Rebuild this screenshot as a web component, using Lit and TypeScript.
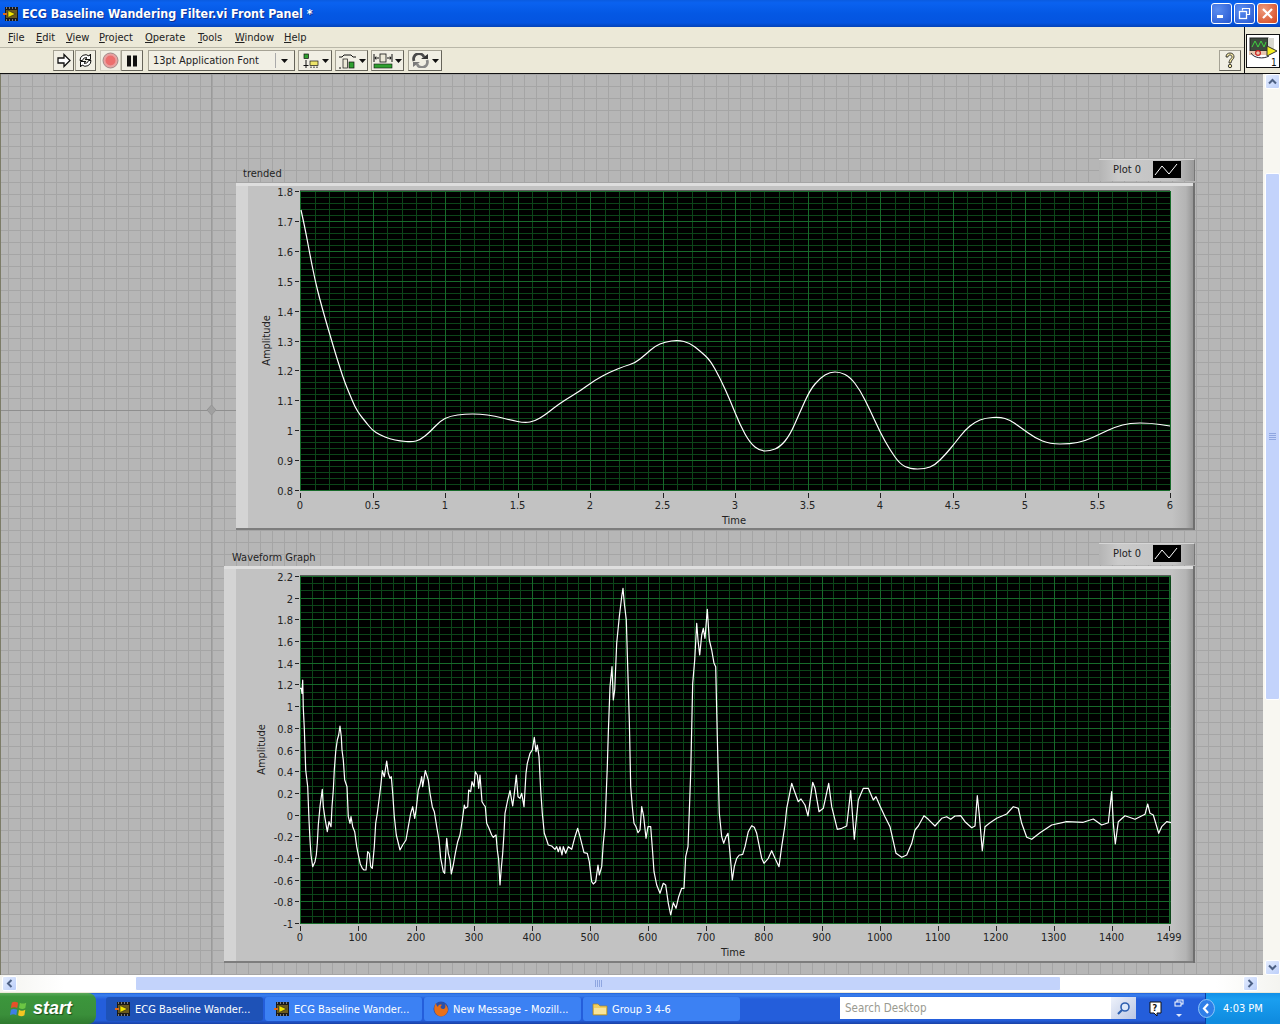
import { LitElement, html, css, svg } from 'lit';
import { customElement, property } from 'lit/decorators.js';

const UI_FONT = '"DejaVu Sans", "Noto Sans", sans-serif';

// traced from the two graphs, page coordinates come out of the helpers below
const TRENDED = [
  301,210,305,228,310,255,315,280,320,300,325,318,330,335,335,352,340,368,345,383,350,395,355,407,360,415,365,421,
  372,430,380,435,390,439,400,441,412,442,420,440,430,432,440,421,450,416,465,414,480,414,495,416,510,420,525,423,
  535,421,545,415,555,407,565,400,580,391,595,380,610,372,625,366,635,363,645,355,655,346,665,342,678,340,690,343,
  700,351,710,360,720,378,730,400,740,425,750,443,760,451,770,451,780,447,790,435,800,412,810,390,820,378,830,372,
  840,372,850,377,860,390,870,410,880,432,890,450,900,464,910,469,925,469,935,465,945,455,955,443,965,430,975,422,
  985,418,1000,417,1010,420,1020,427,1035,438,1050,444,1070,444,1085,441,1100,434,1115,427,1130,423,1150,423,1170,426,
];

const WAVE_LEFT = [
  60,385,64,385,66,400,68,360,70,445,73,505,77,630,83,680,87,780,90,840,93,885,98,920,105,905,109,885,112,850,115,795,
  120,740,127,688,130,740,135,775,142,815,147,785,153,800,156,740,160,690,163,630,167,575,172,540,176,525,180,498,
  184,530,186,570,190,600,194,660,201,680,205,770,210,790,213,770,218,800,224,815,230,860,236,890,241,912,247,925,
  252,930,258,930,263,875,268,880,272,920,277,925,283,860,287,790,292,760,297,720,302,680,307,632,313,650,320,603,
  325,640,330,655,334,650,338,700,343,770,349,825,360,870,368,855,378,840,385,800,392,760,398,740,404,775,409,745,
  415,690,420,675,425,650,428,680,436,632,445,660,450,700,457,740,463,755,470,800,477,840,482,895,490,935,494,940,
  497,880,500,835,505,880,510,900,514,942,520,915,526,880,533,845,540,825,547,780,553,735,556,745,563,740,566,690,
  572,695,576,665,582,680,586,635,592,645,596,685,600,645,606,725,612,735,616,740,620,790,627,805,635,825,640,832,
  648,825,652,870,656,900,660,975,664,925,668,880,672,820,675,760,683,720,690,692,698,738,703,700,709,645,714,710,
  720,715,725,700,732,740,738,640,742,610,750,580,757,570,763,532,768,575,772,555,777,590,782,690,787,760,793,820,
  800,840,805,855,815,858,825,868,830,860,835,875,840,860,846,885,850,860,857,880,865,860,875,868,885,830,893,805,
  900,830,905,850,912,878,922,880,928,905,935,965,940,972,947,965,954,915,958,945,965,920,970,850,975,800,978,720,
  982,620,985,520,990,380,996,320,1000,420,1004,390,1010,250,1018,170,1025,110,1029,85,1033,130,1039,180,1043,320,
  1048,480,1052,680,1057,740,1062,790,1068,800,1074,818,1080,810,1085,740,1091,770,1098,835,1104,800,1112,800,
  1118,880,1122,935,1130,975,1140,1000,1150,970,1157,975,1165,1030,1172,1065,1180,1028,1188,1045,1196,1010,1205,985,
  1212,985,1217,890,1224,860,1232,640,1238,370,1244,300,1250,190,1254,240,1259,285,1265,225,1270,205,1275,235,
  1282,148,1288,240,1295,270,1302,310,1307,320,1312,530,1318,760,1325,830,1331,850,1338,830,1344,820,1350,880,
  1357,960,1363,920,1370,895,1378,885,
];

const WAVE_RIGHT = [
  60,465,68,463,75,440,85,395,95,377,103,382,110,400,116,430,125,475,132,490,145,475,155,452,165,475,177,500,185,440,
  195,375,200,325,215,250,222,270,235,305,243,297,255,315,264,348,278,247,285,265,297,335,310,325,326,250,335,320,
  352,388,365,385,380,378,392,272,403,418,415,300,430,265,445,265,460,300,468,290,480,318,495,350,510,380,528,460,
  545,472,560,465,575,430,585,390,595,378,612,347,625,358,645,378,665,355,680,350,692,358,705,348,722,347,735,365,
  755,383,765,378,772,287,778,345,787,452,795,380,810,368,830,355,860,342,880,320,895,325,905,370,920,412,935,418,
  960,398,995,375,1040,365,1090,367,1120,357,1145,375,1165,368,1175,275,1180,370,1186,432,1195,365,1215,347,1245,358,
  1275,343,1283,312,1290,340,1300,345,1316,400,1325,380,1340,365,1353,368,
];

function fromCrop(data: number[], ox: number, oy: number) {
  const out: string[] = [];
  for (let i = 0; i < data.length; i += 2) {
    out.push(`${(ox + data[i] / 3).toFixed(1)},${(oy + data[i + 1] / 3).toFixed(1)}`);
  }
  return out;
}

// rounds the corners of the traced points with midpoints, for the slow curve
function smoothPath(data: number[]) {
  let d = `M${data[0]} ${data[1]}`;
  for (let i = 2; i < data.length - 2; i += 2) {
    const mx = (data[i] + data[i + 2]) / 2;
    const my = (data[i + 1] + data[i + 3]) / 2;
    d += ` Q${data[i]} ${data[i + 1]} ${mx} ${my}`;
  }
  return d + ` L${data[data.length - 2]} ${data[data.length - 1]}`;
}

interface GraphConfig {
  label: string;
  labelPad: number;
  left: number;
  frameTop: number;
  frameBottom: number;
  headHeight: number;
  legendGap: number;
  plot: { x0: number; x1: number; y0: number; y1: number };
  xTicks: { label: string; x: number }[];
  yTicks: { label: string; y: number }[];
  xMinor: number;
  yMinor: number;
  xLabelDy: number;
  timeX: number;
  ampX: number;
  path: string;
}

const range = (n: number, f: (i: number) => any) => Array.from({ length: n }, (_, i) => f(i));

const TOP_GRAPH: GraphConfig = {
  label: 'trended',
  labelPad: 7,
  left: 236,
  frameTop: 183,
  frameBottom: 530,
  headHeight: 24,
  legendGap: 2,
  plot: { x0: 300, x1: 1170, y0: 191, y1: 490 },
  xTicks: range(13, (i) => ({ label: String(i / 2), x: 300 + i * 72.5 })),
  yTicks: range(11, (i) => ({ label: String(Number((1.8 - i / 10).toFixed(1))), y: 191 + i * 29.9 })),
  xMinor: 5,
  yMinor: 5,
  xLabelDy: 19,
  timeX: 734,
  ampX: 266,
  path: smoothPath(TRENDED),
};

const BOTTOM_GRAPH: GraphConfig = {
  label: 'Waveform Graph',
  labelPad: 8,
  left: 224,
  frameTop: 566,
  frameBottom: 963,
  headHeight: 23,
  legendGap: 1,
  plot: { x0: 300, x1: 1171, y0: 576, y1: 923 },
  xTicks: [
    ...range(15, (i) => ({ label: String(i * 100), x: 300 + i * 57.97 })),
    { label: '1499', x: 1169 },
  ],
  yTicks: range(17, (i) => ({ label: String(Number((2.2 - i / 5).toFixed(1))), y: 576 + i * 21.69 })),
  xMinor: 5,
  yMinor: 3,
  xLabelDy: 18,
  timeX: 733,
  ampX: 261,
  path: 'M' + [...fromCrop(WAVE_LEFT, 280, 560), ...fromCrop(WAVE_RIGHT, 720, 700)].join(' L'),
};

@customElement('lv-graph')
export class LvGraph extends LitElement {
  static styles = css`
    :host {
      display: block;
      position: absolute;
      font-family: ${css([UI_FONT] as any)};
      font-stretch: condensed;
      color: #222;
    }
    .head {
      display: flex;
      align-items: flex-end;
      justify-content: space-between;
      font-size: 11px;
    }
    .title {
      line-height: 16px;
    }
    .legend {
      width: 96px;
      height: 22px;
      box-sizing: border-box;
      display: flex;
      align-items: center;
      padding: 0 0 2px 14px;
      background: linear-gradient(90deg, #b4b4b4, #cacaca 20%, #c2c2c2 80%, #9a9a9a);
      border-top: 1px solid #d6d6d6;
      border-right: 1px solid #777;
    }
    .legend span {
      width: 40px;
    }
    .frame {
      position: relative;
      background: #c2c2c2;
    }
    svg.body {
      display: block;
    }
    svg.body text {
      font-family: ${css([UI_FONT] as any)};
      font-stretch: condensed;
      font-size: 11px;
      fill: #222;
    }
  `;

  @property({ attribute: false }) config!: GraphConfig;

  render() {
    const c = this.config;
    const p = c.plot;
    const w = 1195 - c.left;
    const h = c.frameBottom - c.frameTop;
    const xs = c.xTicks;
    const ys = c.yTicks;
    const dx = (xs[1].x - xs[0].x) / c.xMinor;
    const dy = (ys[1].y - ys[0].y) / c.yMinor;
    const minorX: number[] = [];
    for (let x = p.x0; x < p.x1; x += dx) minorX.push(Math.round(x) + 0.5);
    const minorY: number[] = [];
    for (let y = p.y0; y < p.y1; y += dy) minorY.push(Math.round(y) + 0.5);
    const gid = `band${c.left}`;

    return html`
      <div class="head" style="width:${w}px;height:${c.headHeight}px">
        <span class="title" style="padding-left:${c.labelPad}px;padding-bottom:${c.legendGap - 1}px">${c.label}</span>
        <div class="legend" style="margin-bottom:${c.legendGap}px">
          <span>Plot 0</span>
          <svg width="28" height="17" viewBox="0 0 28 17">
            <rect width="28" height="17" fill="#000"></rect>
            <path d="M2 14 L9 5 L16 13 L24 3" fill="none" stroke="#fff" stroke-width="1"></path>
          </svg>
        </div>
      </div>
      <div class="frame" style="width:${w}px;height:${h}px">
        <svg class="body" width=${w} height=${h} viewBox="${c.left} ${c.frameTop} ${w} ${h}">
          <defs>
            <linearGradient id=${gid} x1="0" x2="1" y1="0" y2="0">
              <stop offset="0" stop-color="#c2c2c2"></stop>
              <stop offset="0.6" stop-color="#b4b4b4"></stop>
              <stop offset="1" stop-color="#8f8f8f"></stop>
            </linearGradient>
          </defs>
          <rect x=${c.left} y=${c.frameTop} width="12" height=${h} fill="#d4d4d4"></rect>
          <rect x="1172" y=${c.frameTop} width="23" height=${h} fill="url(#${gid})"></rect>
          <rect x=${c.left} y=${c.frameTop} width=${w} height="3" fill="#dedede"></rect>
          <rect x=${c.left} y=${c.frameBottom - 2} width=${w} height="2" fill="#7d7d7d"></rect>
          <rect x="1193" y=${c.frameTop} width="2" height=${h} fill="#6f6f6f"></rect>

          <rect x=${p.x0} y=${p.y0} width=${p.x1 - p.x0} height=${p.y1 - p.y0} fill="#000"></rect>
          <g shape-rendering="crispEdges" stroke-width="1">
            ${minorX.map((x) => svg`<line x1=${x} x2=${x} y1=${p.y0} y2=${p.y1} stroke="#0c4519"></line>`)}
            ${minorY.map((y) => svg`<line x1=${p.x0} x2=${p.x1} y1=${y} y2=${y} stroke="#0c4519"></line>`)}
            ${xs.map((t) => svg`<line x1=${Math.round(t.x) + 0.5} x2=${Math.round(t.x) + 0.5} y1=${p.y0} y2=${p.y1} stroke="#176a2a"></line>`)}
            ${ys.map((t) => svg`<line x1=${p.x0} x2=${p.x1} y1=${Math.round(t.y) + 0.5} y2=${Math.round(t.y) + 0.5} stroke="#176a2a"></line>`)}
            <line x1=${p.x0} x2=${p.x1} y1=${p.y0 - 0.5} y2=${p.y0 - 0.5} stroke="#5c5c5c"></line>
            ${xs.map((t) => svg`<line x1=${Math.round(t.x) + 0.5} x2=${Math.round(t.x) + 0.5} y1=${p.y1 + 3} y2=${p.y1 + 8} stroke="#222"></line>`)}
            ${ys.map((t) => svg`<line x1=${p.x0 - 5} x2=${p.x0 - 1} y1=${Math.round(t.y) + 0.5} y2=${Math.round(t.y) + 0.5} stroke="#222"></line>`)}
          </g>
          <path d=${c.path} fill="none" stroke="#fff" stroke-width="1.2" stroke-linejoin="round"></path>

          ${xs.map((t) => svg`<text x=${t.x} y=${p.y1 + c.xLabelDy} text-anchor="middle">${t.label}</text>`)}
          ${ys.map((t) => svg`<text x=${p.x0 - 7} y=${t.y + 5} text-anchor="end">${t.label}</text>`)}
          <text x=${c.timeX} y=${p.y1 + c.xLabelDy + 15} text-anchor="middle">Time</text>
          <text transform="translate(${c.ampX + 4} ${(p.y0 + p.y1) / 2}) rotate(-90)" text-anchor="middle">Amplitude</text>
        </svg>
      </div>
    `;
  }
}

const MENUS = [
  ['F', 'ile', 28],
  ['E', 'dit', 30],
  ['V', 'iew', 33],
  ['P', 'roject', 46],
  ['O', 'perate', 53],
  ['T', 'ools', 37],
  ['W', 'indow', 49],
  ['H', 'elp', 30],
] as const;

const lvIcon = (size: number) => svg`
  <svg width=${size} height=${size} viewBox="0 0 16 16">
    <rect x="2" y="1" width="13" height="14" fill="#1a1a1a"></rect>
    <path d="M3 2h1M6 2h1M9 2h1M12 2h1M3 14h1M6 14h1M9 14h1M12 14h1" stroke="#d8d8d8"></path>
    <rect x="3" y="4" width="11" height="8" fill="#6b5a1e"></rect>
    <path d="M5 4.5 L12.5 8 L5 11.5 Z" fill="#f3e600" stroke="#222" stroke-width=".6"></path>
    <path d="M0 8h4" stroke="#e06a1a" stroke-width="2"></path>
  </svg>
`;

const arrowV = (up: boolean) => html`
  <svg width="9" height="7" viewBox="0 0 9 7">
    <path d=${up ? 'M1 5.5 L4.5 2 L8 5.5' : 'M1 1.5 L4.5 5 L8 1.5'} fill="none" stroke="#4d6185" stroke-width="2"></path>
  </svg>
`;

const arrowH = (left: boolean) => html`
  <svg width="7" height="9" viewBox="0 0 7 9">
    <path d=${left ? 'M5.5 1 L2 4.5 L5.5 8' : 'M1.5 1 L5 4.5 L1.5 8'} fill="none" stroke="#4d6185" stroke-width="2"></path>
  </svg>
`;

const dropArrow = html`<svg width="7" height="4" viewBox="0 0 7 4"><path d="M0 0h7L3.5 4z" fill="#111"></path></svg>`;

@customElement('app-root')
export class AppRoot extends LitElement {
  static styles = css`
    :host {
      display: flex;
      flex-direction: column;
      width: 1280px;
      height: 1024px;
      overflow: hidden;
      font-family: ${css([UI_FONT] as any)};
      font-stretch: condensed;
      font-size: 11px;
      background: #ece9d8;
    }

    /* title bar */
    .titlebar {
      height: 27px;
      flex: none;
      box-sizing: border-box;
      display: flex;
      align-items: center;
      padding: 0 2px 0 3px;
      color: #fff;
      background: linear-gradient(180deg, #0a5be0 0, #0a62f0 10%, #0458e4 50%, #0454e0 85%, #0443b8 100%);
    }
    .titlebar .name {
      margin-left: 3px;
      font-weight: 700;
      font-size: 12.4px;
      flex: 1;
      white-space: nowrap;
      text-shadow: 1px 1px 0 #0f2f90;
    }
    .winbtns {
      display: flex;
      gap: 2px;
    }
    .winbtn {
      width: 21px;
      height: 21px;
      box-sizing: border-box;
      border: 1px solid #fff;
      border-radius: 3px;
      display: flex;
      align-items: center;
      justify-content: center;
      background: radial-gradient(circle at 30% 30%, #5b8df0, #2456d0);
    }
    .winbtn.close {
      background: radial-gradient(circle at 30% 30%, #ee9a7c, #d2441c);
    }

    /* menu and toolbar */
    .chrome {
      height: 46px;
      flex: none;
      display: flex;
      border-bottom: 1px solid #111;
    }
    .bars {
      flex: 1;
      display: flex;
      flex-direction: column;
      min-width: 0;
    }
    .menubar {
      height: 21px;
      flex: none;
      box-sizing: border-box;
      display: flex;
      align-items: center;
      padding-left: 3px;
      border-bottom: 1px solid #b9b7a8;
      color: #222;
    }
    .menu {
      box-sizing: border-box;
      padding-left: 5px;
      white-space: nowrap;
    }
    .toolbar {
      flex: 1;
      display: flex;
      align-items: center;
      padding: 0 3px 0 53px;
    }
    .tb {
      height: 21px;
      box-sizing: border-box;
      display: flex;
      align-items: center;
      justify-content: center;
      background: #f1efe4;
      border: 1px solid #a5a294;
      border-right-color: #66645a;
      border-bottom-color: #66645a;
      flex: none;
    }
    .font {
      width: 147px;
      margin-left: 5px;
      justify-content: space-between;
      padding: 0 6px 0 4px;
      color: #222;
    }
    .font .sep {
      width: 1px;
      height: 15px;
      background: #aaa;
      margin-left: auto;
      margin-right: 5px;
    }
    .help {
      width: 22px;
      margin-left: auto;
    }
    .connector {
      width: 36px;
      flex: none;
      box-sizing: border-box;
      border-left: 1px solid #111;
      padding: 7px 0 0 1px;
    }
    .pane {
      display: block;
      background: #fff;
      border: 1px solid #111;
    }

    /* panel */
    .middle {
      flex: 1;
      display: flex;
      min-height: 0;
    }
    .canvas {
      flex: 1;
      position: relative;
      overflow: hidden;
      background-color: #b6b6b6;
      background-image: linear-gradient(90deg, #a5a5a5 1px, transparent 1px),
        linear-gradient(180deg, #a5a5a5 1px, transparent 1px);
      background-size: 12px 12px;
      background-position: 7px 0;
      border-left: 1px solid #7c7c68;
    }
    .origin {
      position: absolute;
      left: 0;
      top: 0;
    }

    /* scrollbars */
    .vscroll {
      width: 17px;
      flex: none;
      display: flex;
      flex-direction: column;
      align-items: center;
      background: #f8f7f1;
      padding-left: 1px;
      box-sizing: border-box;
    }
    .sbtn {
      flex: none;
      display: flex;
      align-items: center;
      justify-content: center;
      box-sizing: border-box;
      width: 15px;
      height: 15px;
      background: linear-gradient(135deg, #e3ecfe, #bccffa);
      border: 1px solid #fff;
      border-radius: 2px;
    }
    .vthumb {
      width: 15px;
      height: 527px;
      margin-top: 84px;
      box-sizing: border-box;
      background: #c3d3fb;
      border: 1px solid #fff;
      border-radius: 2px;
      display: flex;
      align-items: center;
      justify-content: center;
    }
    .spacer {
      flex: 1;
    }
    .grip-v {
      width: 7px;
      height: 7px;
      background: repeating-linear-gradient(180deg, #8fa6e0 0 1px, transparent 1px 2px);
    }
    .grip-h {
      width: 7px;
      height: 7px;
      background: repeating-linear-gradient(90deg, #8fa6e0 0 1px, transparent 1px 2px);
    }
    .hscroll {
      height: 17px;
      flex: none;
      display: flex;
      align-items: center;
      background: linear-gradient(90deg, #f4f4f0, #fff 5%, #fff 95%, #f4f4f0);
      padding: 0 22px 0 2px;
      box-sizing: border-box;
    }
    .hthumb {
      height: 15px;
      width: 926px;
      margin-left: 118px;
      box-sizing: border-box;
      background: #c3d3fb;
      border: 1px solid #fff;
      border-radius: 2px;
      display: flex;
      align-items: center;
      justify-content: center;
    }

    /* taskbar */
    .taskbar {
      height: 31px;
      flex: none;
      margin-top: 1px;
      box-sizing: border-box;
      display: flex;
      align-items: stretch;
      color: #fff;
      background: linear-gradient(180deg, #1f5fd8 0, #3a80ee 6%, #245edb 20%, #245edb 88%, #1941a5 100%);
    }
    .start {
      width: 96px;
      flex: none;
      display: flex;
      align-items: center;
      gap: 5px;
      padding-left: 10px;
      box-sizing: border-box;
      border-radius: 0 8px 8px 0;
      background: linear-gradient(180deg, #5aa95a 0, #3c963c 12%, #3a8f3a 70%, #2f7a2f 100%);
      font-family: "Liberation Sans", sans-serif;
      font-style: italic;
      font-weight: 700;
      font-size: 18px;
      text-shadow: 1px 1px 1px #1b4d1b;
    }
    .tasks {
      display: flex;
      margin-left: 10px;
      padding-top: 4px;
      gap: 2px;
    }
    .task {
      width: 157px;
      height: 24px;
      box-sizing: border-box;
      border-radius: 3px;
      display: flex;
      align-items: center;
      gap: 4px;
      padding-left: 9px;
      white-space: nowrap;
      background: #3c81f3;
    }
    .task.active {
      background: #1e52b7;
    }
    .search {
      margin: 4px 0 5px auto;
      width: 271px;
      background: #fff;
      color: #9a9a90;
      display: flex;
      align-items: center;
      padding-left: 5px;
      box-sizing: border-box;
      font-size: 11.5px;
    }
    .searchbtn {
      width: 25px;
      margin: 4px 0 5px;
      background: linear-gradient(135deg, #eef2fb, #b9c6e4);
      display: flex;
      align-items: center;
      justify-content: center;
    }
    .tray-icons {
      width: 69px;
      display: flex;
      align-items: center;
      gap: 12px;
      padding-left: 13px;
      box-sizing: border-box;
    }
    .tray {
      width: 75px;
      box-sizing: border-box;
      display: flex;
      align-items: center;
      padding-left: 17px;
      background: linear-gradient(180deg, #1290e8, #1a9ff0 20%, #0f8ce0 90%);
      border-left: 1px solid #0b3fa6;
      position: relative;
    }
    .chev {
      position: absolute;
      left: -8px;
      top: 6px;
    }
  `;

  render() {
    return html`
      <div class="titlebar">
        ${lvIcon(16)}
        <span class="name">ECG Baseline Wandering Filter.vi Front Panel *</span>
        <div class="winbtns">
          <div class="winbtn">
            <svg width="11" height="11" viewBox="0 0 11 11"><rect x="1" y="7" width="6" height="3" fill="#fff"></rect></svg>
          </div>
          <div class="winbtn">
            <svg width="13" height="13" viewBox="0 0 13 13">
              <path d="M4.5 3.5V1.5H11.5V7.5H9" fill="none" stroke="#fff" stroke-width="1.2"></path>
              <rect x="1.5" y="4.5" width="7" height="7" fill="none" stroke="#fff" stroke-width="1.3"></rect>
            </svg>
          </div>
          <div class="winbtn close">
            <svg width="13" height="13" viewBox="0 0 13 13">
              <path d="M2 2L11 11M11 2L2 11" stroke="#fff" stroke-width="2.2"></path>
            </svg>
          </div>
        </div>
      </div>

      <div class="chrome">
        <div class="bars">
          <div class="menubar">
            ${MENUS.map(([k, rest, w]) => html`<span class="menu" style="width:${w}px"><u>${k}</u>${rest}</span>`)}
          </div>
          <div class="toolbar">${this.renderTools()}</div>
        </div>
        <div class="connector">
          <svg class="pane" width="32" height="32" viewBox="0 0 32 32">
            <rect x="3" y="3" width="18" height="13" fill="#3c4a3c" stroke="#222"></rect>
            <path d="M5 12 L8 6 L11 12 L14 6 L17 12 L19 7" fill="none" stroke="#3fd23f"></path>
            <rect x="21" y="3" width="6" height="13" fill="#d8d8d0"></rect>
            <path d="M2 16 H22 L22 20 H2Z" fill="#e8c8b0"></path>
            <path d="M4 18a11 7 0 0 0 18 3" fill="none" stroke="#223" stroke-width="1"></path>
            <circle cx="11" cy="18" r="2.4" fill="none" stroke="#c22" stroke-width="1.2"></circle>
            <path d="M20 11 L30 16 L20 21Z" fill="#f4ee20" stroke="#333"></path>
            <text x="24" y="31" font-size="10" font-family="DejaVu Sans, sans-serif" fill="#111">1</text>
          </svg>
        </div>
      </div>

      <div class="middle">
        <div class="canvas">
          <svg class="origin" width="1263" height="901" viewBox="0 74 1263 901">
            <g shape-rendering="crispEdges" stroke="#8f8f8f">
              <line x1="0" x2="240" y1="410.5" y2="410.5"></line>
              <line x1="210.5" x2="210.5" y1="74" y2="975" stroke="#9a9a9a"></line>
            </g>
            <path d="M210.5 405 L215 410 L210.5 415 L206 410Z" fill="#a0a0a0" stroke="#959595"></path>
          </svg>
          <lv-graph .config=${TOP_GRAPH} style="left:235px;top:85px"></lv-graph>
          <lv-graph .config=${BOTTOM_GRAPH} style="left:223px;top:469px"></lv-graph>
        </div>
        <div class="vscroll">
          <div class="sbtn">${arrowV(true)}</div>
          <div class="vthumb"><div class="grip-v"></div></div>
          <div class="spacer"></div>
          <div class="sbtn">${arrowV(false)}</div>
        </div>
      </div>

      <div class="hscroll">
        <div class="sbtn">${arrowH(true)}</div>
        <div class="hthumb"><div class="grip-h"></div></div>
        <div class="spacer"></div>
        <div class="sbtn">${arrowH(false)}</div>
      </div>

      ${this.renderTaskbar()}
    `;
  }

  renderTools() {
    return html`
      <div class="tb" style="width:21px">
        <svg width="15" height="15" viewBox="0 0 15 15">
          <path d="M2 5H8V1.500L14 7.500L8 13.500V10H2Z" fill="#fff" stroke="#111" stroke-width="1.3"></path>
        </svg>
      </div>
      <div class="tb" style="width:21px;margin-left:1px">
        <svg width="17" height="17" viewBox="0 0 17 17">
          <path d="M3 8.500A5.500 5.500 0 0 1 12 4L13.500 2V7.500H8L10 5.800A3.500 3.500 0 0 0 5.500 8.500Z" fill="#fff" stroke="#111"></path>
          <path d="M14 8.500A5.500 5.500 0 0 1 5 13L3.500 15V9.500H9L7 11.200A3.500 3.500 0 0 0 11.500 8.500Z" fill="#fff" stroke="#111"></path>
        </svg>
      </div>
      <div class="tb" style="width:21px;margin-left:4px;border-color:#ccc9bb">
        <svg width="17" height="17" viewBox="0 0 17 17">
          <circle cx="8.500" cy="8.500" r="7.500" fill="#e9a0a0" stroke="#a08a8a"></circle>
          <circle cx="8.500" cy="8.500" r="5" fill="#ec6e6e"></circle>
        </svg>
      </div>
      <div class="tb" style="width:22px">
        <svg width="12" height="12" viewBox="0 0 12 12">
          <rect x="1" y="0.500" width="4" height="11" fill="#111"></rect>
          <rect x="7" y="0.500" width="4" height="11" fill="#111"></rect>
        </svg>
      </div>
      <div class="tb font">
        <span>13pt Application Font</span>
        <span class="sep"></span>
        ${dropArrow}
      </div>
      <div class="tb" style="width:34px;margin-left:3px;gap:2px">
        <svg width="19" height="16" viewBox="0 0 19 16">
          <rect x="3" y="1" width="4.500" height="4.500" fill="#2fa02f" stroke="#111" stroke-width=".7"></rect>
          <path d="M5 7V15M2.500 12.500H7.500M10 13.500V15M13 13.500V15M16 13.500V15" stroke="#111" fill="none"></path>
          <rect x="9" y="8" width="8" height="4.500" fill="#ece46a" stroke="#111" stroke-width=".7"></rect>
        </svg>
        ${dropArrow}
      </div>
      <div class="tb" style="width:33px;margin-left:3px;gap:2px">
        <svg width="19" height="16" viewBox="0 0 19 16">
          <path d="M1 4H4L6 2H13L15 4H18" fill="none" stroke="#111"></path>
          <rect x="5" y="6" width="4.500" height="9" fill="#ece9d8" stroke="#111" stroke-width=".7"></rect>
          <rect x="11" y="9" width="5" height="6" fill="#2fa02f" stroke="#111" stroke-width=".7"></rect>
          <path d="M1 15H3" stroke="#111"></path>
        </svg>
        ${dropArrow}
      </div>
      <div class="tb" style="width:33px;margin-left:3px;gap:2px">
        <svg width="20" height="16" viewBox="0 0 20 16">
          <path d="M1 1V9M19 1V9" stroke="#111" fill="none"></path>
          <rect x="7" y="1" width="6" height="8" fill="#ece9d8" stroke="#111" stroke-width=".8"></rect>
          <path d="M2 5H6M14 5H18M3 3.500L2 5L3 6.500M17 3.500L18 5L17 6.500" stroke="#111" fill="none"></path>
          <rect x="1" y="11" width="18" height="4" fill="#2fa02f" stroke="#111" stroke-width=".6"></rect>
        </svg>
        ${dropArrow}
      </div>
      <div class="tb" style="width:34px;margin-left:4px;gap:2px">
        <svg width="19" height="15" viewBox="0 0 19 15">
          <path d="M3 8A5 5 0 0 1 13 4" fill="none" stroke="#4a4a4a" stroke-width="2.800"></path>
          <path d="M10 6H17V1Z" fill="#333"></path>
          <path d="M16 7A5 5 0 0 1 6 11" fill="none" stroke="#8a8a8a" stroke-width="2.800"></path>
          <path d="M9 9H2V14Z" fill="#7a7a7a"></path>
        </svg>
        ${dropArrow}
      </div>
      <div class="tb help">
        <svg width="12" height="17" viewBox="0 0 12 17">
          <path d="M2 5C2 2 4 1 6 1C9 1 10 3 10 5C10 7 7 8 7 11H5C5 7 8 6.500 8 5C8 3.800 7 3 6 3C5 3 4 3.800 4 5Z" fill="#f5e9a6" stroke="#111" stroke-width=".8"></path>
          <circle cx="6" cy="14" r="1.700" fill="#f5e9a6" stroke="#111" stroke-width=".8"></circle>
        </svg>
      </div>
    `;
  }

  renderTaskbar() {
    return html`
      <div class="taskbar">
        <div class="start">
          <svg width="18" height="19" viewBox="0 0 20 19">
            <path d="M2 3Q5 1 9 3L8 9Q5 7 1 9Z" fill="#e5502a"></path>
            <path d="M11 3Q14 5 18 3L17 9Q14 11 10 9Z" fill="#6cc644"></path>
            <path d="M1 11Q4 9 8 11L7 17Q4 15 0 17Z" fill="#3f7fe6"></path>
            <path d="M10 11Q13 13 17 11L16 17Q13 19 9 17Z" fill="#f4c522"></path>
          </svg>
          <span>start</span>
        </div>
        <div class="tasks">
          <div class="task active">${lvIcon(16)}<span>ECG Baseline Wander...</span></div>
          <div class="task">${lvIcon(16)}<span>ECG Baseline Wander...</span></div>
          <div class="task">
            <svg width="16" height="16" viewBox="0 0 16 16">
              <circle cx="8" cy="8" r="7.500" fill="#2b4fa8"></circle>
              <path d="M3 2C1 5 0 10 4 14C8 17 14 15 15 9C15 6 13 4 12 3C13 6 12 8 10 8C7 8 7 5 9 4C7 3 5 4 5 6C4 5 3 4 3 2Z" fill="#e8701a"></path>
            </svg>
            <span>New Message - Mozill...</span>
          </div>
          <div class="task">
            <svg width="16" height="14" viewBox="0 0 16 14">
              <path d="M1 2H6L8 4H15V13H1Z" fill="#f2cf5f" stroke="#a5812a" stroke-width=".7"></path>
              <rect x="2" y="6" width="12" height="6" fill="#f9e49a"></rect>
            </svg>
            <span>Group 3 4-6</span>
          </div>
        </div>
        <div class="search">Search Desktop</div>
        <div class="searchbtn">
          <svg width="15" height="15" viewBox="0 0 15 15">
            <circle cx="9" cy="6" r="4" fill="#dce8fa" stroke="#2d5fb0" stroke-width="1.600"></circle>
            <path d="M6 9L2 13" stroke="#2d5fb0" stroke-width="2.200"></path>
          </svg>
        </div>
        <div class="tray-icons">
          <svg width="13" height="16" viewBox="0 0 13 16">
            <path d="M1 1H12V12H8V15L5 12H1Z" fill="#fff" stroke="#111"></path>
            <text x="3.500" y="10" font-size="9" font-weight="700" font-family="DejaVu Sans, sans-serif" fill="#111">?</text>
          </svg>
          <svg width="10" height="20" viewBox="0 0 10 20">
            <rect x="3" y="1" width="6" height="4" fill="none" stroke="#fff"></rect>
            <rect x="1" y="3" width="6" height="4" fill="#245edb" stroke="#fff"></rect>
            <path d="M2 15H8L5 18Z" fill="#dfe8fa"></path>
          </svg>
        </div>
        <div class="tray">
          <svg class="chev" width="17" height="19" viewBox="0 0 17 19">
            <ellipse cx="8.500" cy="9.500" rx="8" ry="9" fill="#2f7fe8" stroke="#8cc4f8"></ellipse>
            <path d="M10 5L6 9.500L10 14" fill="none" stroke="#fff" stroke-width="2.200"></path>
          </svg>
          <span>4:03 PM</span>
        </div>
      </div>
    `;
  }
}
